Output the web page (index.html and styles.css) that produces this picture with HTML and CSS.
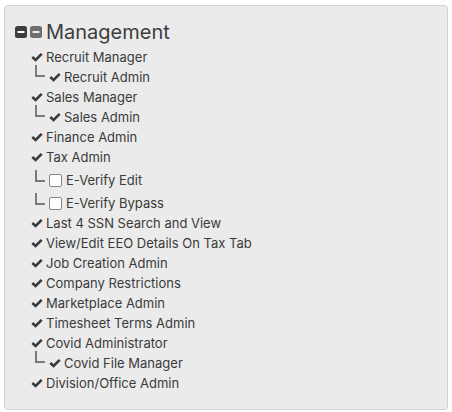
FILE: index.html
```html
<!DOCTYPE html>
<html>
<head>
<meta charset="utf-8">
<link rel="stylesheet" href="styles.css">
</head>
<body>
<div class="panel">
  <div class="header">
    <svg class="sq" viewBox="0 0 12 12"><rect x="0" y="0" width="12" height="12" rx="2.5" fill="#3f3f3f"/><rect x="2.5" y="5" width="7" height="2" fill="#fff"/></svg>
    <svg class="sq" viewBox="0 0 12 12"><rect x="0" y="0" width="12" height="12" rx="2.5" fill="#6f6f6f"/><rect x="2.5" y="5" width="7" height="2" fill="#ebebeb"/></svg>
    <span class="title">Management</span>
  </div>
  <ul class="list">
    <li class="row"><svg class="chk" viewBox="0 0 12 10"><polyline points="1.3,5 4.6,8 10.7,1.8"/></svg>Recruit Manager</li>
    <li class="row sub"><span class="elbow"></span><svg class="chk" viewBox="0 0 12 10"><polyline points="1.3,5 4.6,8 10.7,1.8"/></svg>Recruit Admin</li>
    <li class="row"><svg class="chk" viewBox="0 0 12 10"><polyline points="1.3,5 4.6,8 10.7,1.8"/></svg>Sales Manager</li>
    <li class="row sub"><span class="elbow"></span><svg class="chk" viewBox="0 0 12 10"><polyline points="1.3,5 4.6,8 10.7,1.8"/></svg>Sales Admin</li>
    <li class="row"><svg class="chk" viewBox="0 0 12 10"><polyline points="1.3,5 4.6,8 10.7,1.8"/></svg>Finance Admin</li>
    <li class="row"><svg class="chk" viewBox="0 0 12 10"><polyline points="1.3,5 4.6,8 10.7,1.8"/></svg>Tax Admin</li>
    <li class="row sub box"><span class="elbow"></span><span class="cb"></span>E-Verify Edit</li>
    <li class="row sub box"><span class="elbow"></span><span class="cb"></span>E-Verify Bypass</li>
    <li class="row"><svg class="chk" viewBox="0 0 12 10"><polyline points="1.3,5 4.6,8 10.7,1.8"/></svg>Last 4 SSN Search and View</li>
    <li class="row"><svg class="chk" viewBox="0 0 12 10"><polyline points="1.3,5 4.6,8 10.7,1.8"/></svg>View/Edit EEO Details On Tax Tab</li>
    <li class="row"><svg class="chk" viewBox="0 0 12 10"><polyline points="1.3,5 4.6,8 10.7,1.8"/></svg>Job Creation Admin</li>
    <li class="row"><svg class="chk" viewBox="0 0 12 10"><polyline points="1.3,5 4.6,8 10.7,1.8"/></svg>Company Restrictions</li>
    <li class="row"><svg class="chk" viewBox="0 0 12 10"><polyline points="1.3,5 4.6,8 10.7,1.8"/></svg>Marketplace Admin</li>
    <li class="row"><svg class="chk" viewBox="0 0 12 10"><polyline points="1.3,5 4.6,8 10.7,1.8"/></svg>Timesheet Terms Admin</li>
    <li class="row"><svg class="chk" viewBox="0 0 12 10"><polyline points="1.3,5 4.6,8 10.7,1.8"/></svg>Covid Administrator</li>
    <li class="row sub"><span class="elbow"></span><svg class="chk" viewBox="0 0 12 10"><polyline points="1.3,5 4.6,8 10.7,1.8"/></svg>Covid File Manager</li>
    <li class="row"><svg class="chk" viewBox="0 0 12 10"><polyline points="1.3,5 4.6,8 10.7,1.8"/></svg>Division/Office Admin</li>
  </ul>
</div>
</body>
</html>
```
FILE: styles.css
```css
html, body {
  margin: 0;
  padding: 0;
  background: #ffffff;
}
body {
  font-family: Inter, "Open Sans", sans-serif;
  color: #3a3a3a;
}
.panel {
  box-sizing: border-box;
  margin: 5px 0 0 4px;
  width: 444px;
  height: 405px;
  background: #ebebeb;
  border: 1px solid #d0d0d0;
  border-radius: 4px;
  padding: 13px 10px 0 10px;
}
.header {
  display: flex;
  align-items: center;
  gap: 3px;
  height: 26px;
}
.sq {
  width: 12px;
  height: 12px;
  display: block;
}
.title {
  font-size: 20px;
  color: #3d3d3d;
  margin-left: 1px;
  line-height: 26px;
}
.list {
  list-style: none;
  margin: 2px 0 0 0;
  padding: 0 0 0 16px;
}
.row {
  box-sizing: border-box;
  display: flex;
  align-items: center;
  height: 20px;
  font-size: 13px;
}
.row.box {
  height: 23px;
  padding-top: 3px;
}
.chk {
  width: 12px;
  height: 10px;
  margin-right: 3px;
  flex: none;
}
.chk polyline {
  fill: none;
  stroke: #3a3a3a;
  stroke-width: 2.6;
}
.elbow {
  width: 8px;
  height: 10px;
  border-left: 2px solid #7a7a7a;
  border-bottom: 2px solid #7a7a7a;
  margin: -12px 4px 0 4px;
  flex: none;
}
.row.box .elbow {
  margin-top: -9px;
}
.cb {
  width: 11px;
  height: 11px;
  background: #fff;
  border: 1px solid #888;
  border-radius: 2px;
  margin-right: 4px;
  flex: none;
}
```
